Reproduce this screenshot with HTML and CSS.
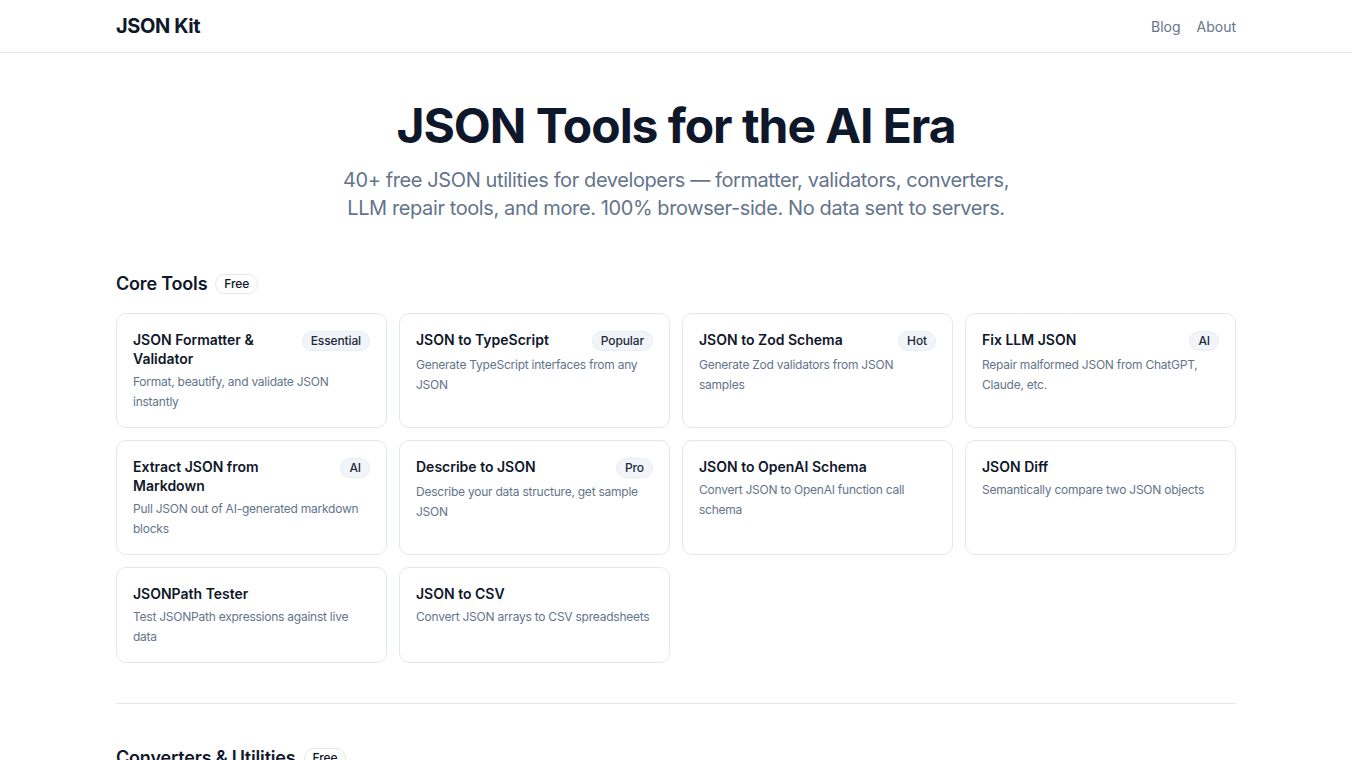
FILE: index.html
```html
<!DOCTYPE html>
<html lang="en">
<head>
    <meta charset="UTF-8">
    <meta name="viewport" content="width=device-width, initial-scale=1.0">
    <link rel="stylesheet" href="styles.css">
    <title>JSON Kit — JSON Tools for the AI Era</title>
</head>
<body>
    <!-- Top bar -->
    <header class="topbar">
        <div class="container topbar-inner">
            <a href="/" class="logo">JSON Kit</a>
            <nav class="topnav">
                <a href="/blog">Blog</a>
                <a href="/about">About</a>
            </nav>
        </div>
    </header>

    <main class="container">
        <!-- Hero -->
        <section class="hero">
            <h1>JSON Tools for the AI Era</h1>
            <p>40+ free JSON utilities for developers — formatter, validators, converters,<br>LLM repair tools, and more. 100% browser-side. No data sent to servers.</p>
        </section>

        <!-- Core tools -->
        <section class="tool-section">
            <h2 class="section-title">Core Tools <span class="pill">Free</span></h2>
            <div class="tool-grid">
                <a class="tool-card" href="#">
                    <div class="tool-head">
                        <h3>JSON Formatter &amp; Validator</h3>
                        <span class="tag">Essential</span>
                    </div>
                    <p>Format, beautify, and validate JSON instantly</p>
                </a>
                <a class="tool-card" href="#">
                    <div class="tool-head">
                        <h3>JSON to TypeScript</h3>
                        <span class="tag">Popular</span>
                    </div>
                    <p>Generate TypeScript interfaces from any JSON</p>
                </a>
                <a class="tool-card" href="#">
                    <div class="tool-head">
                        <h3>JSON to Zod Schema</h3>
                        <span class="tag">Hot</span>
                    </div>
                    <p>Generate Zod validators from JSON samples</p>
                </a>
                <a class="tool-card" href="#">
                    <div class="tool-head">
                        <h3>Fix LLM JSON</h3>
                        <span class="tag">AI</span>
                    </div>
                    <p>Repair malformed JSON from ChatGPT, Claude, etc.</p>
                </a>
                <a class="tool-card" href="#">
                    <div class="tool-head">
                        <h3>Extract JSON from Markdown</h3>
                        <span class="tag">AI</span>
                    </div>
                    <p>Pull JSON out of AI-generated markdown blocks</p>
                </a>
                <a class="tool-card" href="#">
                    <div class="tool-head">
                        <h3>Describe to JSON</h3>
                        <span class="tag">Pro</span>
                    </div>
                    <p>Describe your data structure, get sample JSON</p>
                </a>
                <a class="tool-card" href="#">
                    <div class="tool-head">
                        <h3>JSON to OpenAI Schema</h3>
                    </div>
                    <p>Convert JSON to OpenAI function call schema</p>
                </a>
                <a class="tool-card" href="#">
                    <div class="tool-head">
                        <h3>JSON Diff</h3>
                    </div>
                    <p>Semantically compare two JSON objects</p>
                </a>
                <a class="tool-card" href="#">
                    <div class="tool-head">
                        <h3>JSONPath Tester</h3>
                    </div>
                    <p>Test JSONPath expressions against live data</p>
                </a>
                <a class="tool-card" href="#">
                    <div class="tool-head">
                        <h3>JSON to CSV</h3>
                    </div>
                    <p>Convert JSON arrays to CSV spreadsheets</p>
                </a>
            </div>
        </section>

        <!-- Converters -->
        <section class="tool-section divided">
            <h2 class="section-title">Converters &amp; Utilities <span class="pill">Free</span></h2>
        </section>
    </main>
</body>
</html>
```

FILE: styles.css
```css
body {
    margin: 0;
    font-family: 'Inter', 'Liberation Sans', sans-serif;
    color: #0f172a;
    background: #fff;
}

.container {
    width: 1120px;
    margin: 0 auto;
}

/* top bar */
.topbar {
    border-bottom: 1px solid #e5e7eb;
}
.topbar-inner {
    height: 52px;
    display: flex;
    align-items: center;
    justify-content: space-between;
}
.logo {
    font-size: 20px;
    font-weight: 700;
    letter-spacing: -0.02em;
    color: #0f172a;
    text-decoration: none;
}
.topnav {
    display: flex;
    gap: 16px;
}
.topnav a {
    font-size: 14px;
    color: #64748b;
    text-decoration: none;
}

/* hero */
.hero {
    text-align: center;
    padding-top: 49px;
}
.hero h1 {
    margin: 0;
    font-size: 48px;
    line-height: 48px;
    font-weight: 700;
    letter-spacing: -0.022em;
}
.hero p {
    margin: 16px 0 0;
    font-size: 20px;
    line-height: 28px;
    letter-spacing: -0.02em;
    color: #64748b;
}

/* sections */
.tool-section {
    padding-top: 48px;
}
.tool-section.divided {
    margin-top: 40px;
    padding-top: 40px;
    border-top: 1px solid #e5e7eb;
}
.section-title {
    margin: 0 0 15px;
    font-size: 18px;
    line-height: 28px;
    font-weight: 600;
    letter-spacing: -0.01em;
    display: flex;
    align-items: center;
    gap: 8px;
}
.pill {
    font-size: 12px;
    font-weight: 500;
    line-height: 18px;
    padding: 0 8px;
    border: 1px solid #e5e7eb;
    border-radius: 999px;
    letter-spacing: -0.01em;
    color: #0f172a;
}

.tool-grid {
    display: grid;
    grid-template-columns: repeat(4, 1fr);
    gap: 12px;
}
.tool-card {
    display: block;
    border: 1px solid #e2e8f0;
    border-radius: 10px;
    padding: 16px 16px 15px;
    text-decoration: none;
    color: inherit;
}
.tool-head {
    display: flex;
    justify-content: space-between;
    align-items: flex-start;
    gap: 12px;
    min-height: 19px;
}
.tool-head h3 {
    margin: 0;
    font-size: 14px;
    line-height: 19px;
    font-weight: 600;
}
.tag {
    flex-shrink: 0;
    font-size: 12px;
    line-height: 18px;
    font-weight: 500;
    padding: 0 8px;
    margin-top: 1px;
    border-radius: 999px;
    background: #f1f5f9;
    border: 1px solid #e8edf3;
    letter-spacing: -0.01em;
    color: #1e293b;
}
.tool-card p {
    margin: 4px 0 0;
    font-size: 12px;
    line-height: 20px;
    letter-spacing: -0.02em;
    color: #64748b;
}
```
